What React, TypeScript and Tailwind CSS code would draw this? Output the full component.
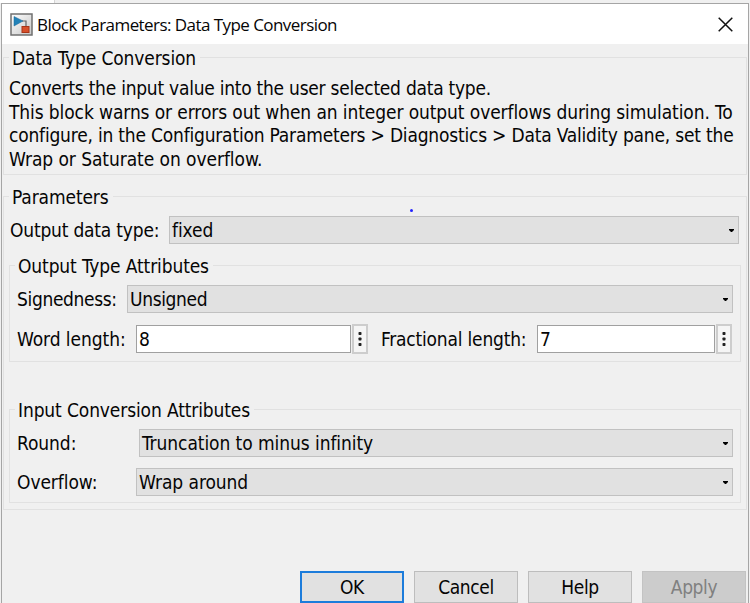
import React from "react";

const Group = ({ title, className, nested = false, children }: { title: string; className: string; nested?: boolean; children: React.ReactNode }) => (
  <section className={`border border-[#e1e1e1] ${className}`}>
    <h2 className={`ml-[5px] h-6 w-fit bg-[#f0f0f0] pr-1 pl-[3px] leading-6 ${nested ? "-mt-[12px] -mb-[1px] tracking-[-0.12px]" : "-mt-[12px] -mb-[1px] tracking-[-0.12px]"}`}>{title}</h2>
    {children}
  </section>
);

const Select = ({ value, className }: { value: string; className: string }) => (
  <button className={`flex h-7 items-center justify-between border border-[#c1c1c1] bg-[#e1e1e1] pr-[4px] pl-[2px] text-left ${className}`}>
    <span>{value}</span>
    <svg width="5" height="3" viewBox="0 0 5 3"><path d="M0 0h5v1L3 3H2L0 1z" /></svg>
  </button>
);

const Field = ({ value, className }: { value: string; className: string }) => (
  <div className="flex items-center">
    <div className={`flex h-7 items-center border border-[#a0a0a0] bg-white pl-[2px] ${className}`}>{value}</div>
    <button className="ml-[1px] flex h-[30px] w-4 items-center justify-center border-2 border-[#cdcdcd] bg-[#f5f5f5]">
      <svg width="4" height="16" viewBox="0 0 4 16" fill="#222"><rect x=".5" y="1" width="3" height="3" rx=".7" /><rect x=".5" y="6.5" width="3" height="3" rx=".7" /><rect x=".5" y="12" width="3" height="3" rx=".7" /></svg>
    </button>
  </div>
);

export default function App() {
  return (
    <div className="relative h-[603px] w-[750px] overflow-hidden bg-[#f0f0f0] font-['DejaVu_Sans_Condensed','DejaVu_Sans',sans-serif] text-[19px] leading-6 font-normal tracking-[-0.07px] whitespace-nowrap text-[#050505] [font-stretch:condensed]">
      <div className="flex h-[3px]"><div className="w-[55px] border-r border-[#d5d5d5] bg-white" /></div>
      <main className="ml-[1px] h-[600px] w-[748px] border-x border-t border-[#a5a5a5] bg-[#f0f0f0]">
        <header className="flex h-10 items-center bg-white pr-[15px] pl-[8px]">
          <svg width="23" height="23" viewBox="0 0 23 23">
            <defs><linearGradient id="tile" x2="1" y2="1"><stop stopColor="#fff" /><stop offset="1" stopColor="#c7c7c7" /></linearGradient></defs>
            <rect x="1" y="1" width="21" height="21" fill="url(#tile)" stroke="#707070" strokeWidth="1.5" />
            <path d="M12 8h4v7" fill="none" stroke="#646464" strokeWidth="1.2" />
            <path d="M4 3.5 13 8l-9 5z" fill="#2382b8" stroke="#1b6898" strokeWidth=".5" />
            <rect x="12" y="13.5" width="7" height="6" fill="#d7502b" stroke="#a73518" />
          </svg>
          <h1 className="mt-[1px] ml-[4px] font-['Open_Sans','Noto_Sans',sans-serif] text-[17px] tracking-[-0.56px] [font-stretch:normal]">Block Parameters: Data Type Conversion</h1>
          <svg className="ml-auto" width="15" height="15" viewBox="0 0 15 15"><path d="m.7.7 13.6 13.6m0-13.6L.7 14.3" stroke="#111" strokeWidth="1.5" /></svg>
        </header>
        <div className="px-[1px] pt-[13px]">
          <Group title="Data Type Conversion" className="h-[118px]">
            <p className="mt-[8px] pl-[5px] leading-[23.5px]">
              <span className="tracking-[-0.25px]">Converts the input value into the user selected data type.</span><br />
              <span className="tracking-[-0.1px]">This block warns or errors out when an integer output overflows during simulation. To</span><br />
              <span className="tracking-[-0.2px]">configure, in the Configuration Parameters &gt; Diagnostics &gt; Data Validity pane, set the</span><br />
              Wrap or Saturate on overflow.
            </p>
          </Group>
          <Group title="Parameters" className="mt-[21px] h-[314px]">
            <div className="mt-[8px] flex items-center pr-[7px] pl-[6px]">
              <span className="w-[159px] tracking-[-0.2px]">Output data type:</span>
              <Select value="fixed" className="flex-1" />
            </div>
            <Group nested title="Output Type Attributes" className="mt-[21px] mr-[5px] ml-[5px] h-[97px]">
              <div className="mt-[8px] flex items-center pr-[7px] pl-[7px]">
                <span className="w-[110px] tracking-[-0.35px]">Signedness:</span>
                <Select value="Unsigned" className="flex-1 tracking-[-0.35px]" />
              </div>
              <div className="mt-[11px] flex items-center pl-[7px]">
                <span className="w-[119px]">Word length:</span>
                <Field value="8" className="w-[215px]" />
                <span className="ml-[13px] w-[156px] tracking-[-0.2px]">Fractional length:</span>
                <Field value="7" className="w-[178px]" />
              </div>
            </Group>
            <Group nested title="Input Conversion Attributes" className="mt-[47px] mr-[5px] ml-[5px] h-[94px]">
              <div className="mt-[8px] flex items-center pr-[7px] pl-[7px]">
                <span className="w-[122px]">Round:</span>
                <Select value="Truncation to minus infinity" className="flex-1" />
              </div>
              <div className="mt-[11px] flex items-center pr-[7px] pl-[7px]">
                <span className="w-[119px]">Overflow:</span>
                <Select value="Wrap around" className="flex-1" />
              </div>
            </Group>
          </Group>
        </div>
        <footer className="mt-[61px] flex justify-end gap-[10px] pr-[2px] tracking-[-0.4px]">
          <button className="h-8 w-[104px] border-2 border-[#1c7cdb] bg-[#e1e1e1]">OK</button>
          <button className="h-8 w-[104px] border border-[#bdbdbd] bg-[#e1e1e1]">Cancel</button>
          <button className="h-8 w-[104px] border border-[#bdbdbd] bg-[#e1e1e1]">Help</button>
          <button className="h-8 w-[104px] border border-[#c3c3c3] bg-[#cccccc] text-[#808080]">Apply</button>
        </footer>
      </main>
      <div className="absolute top-[209px] left-[410px] size-[3px] rounded-full bg-[#2222ff]" />
    </div>
  );
}
